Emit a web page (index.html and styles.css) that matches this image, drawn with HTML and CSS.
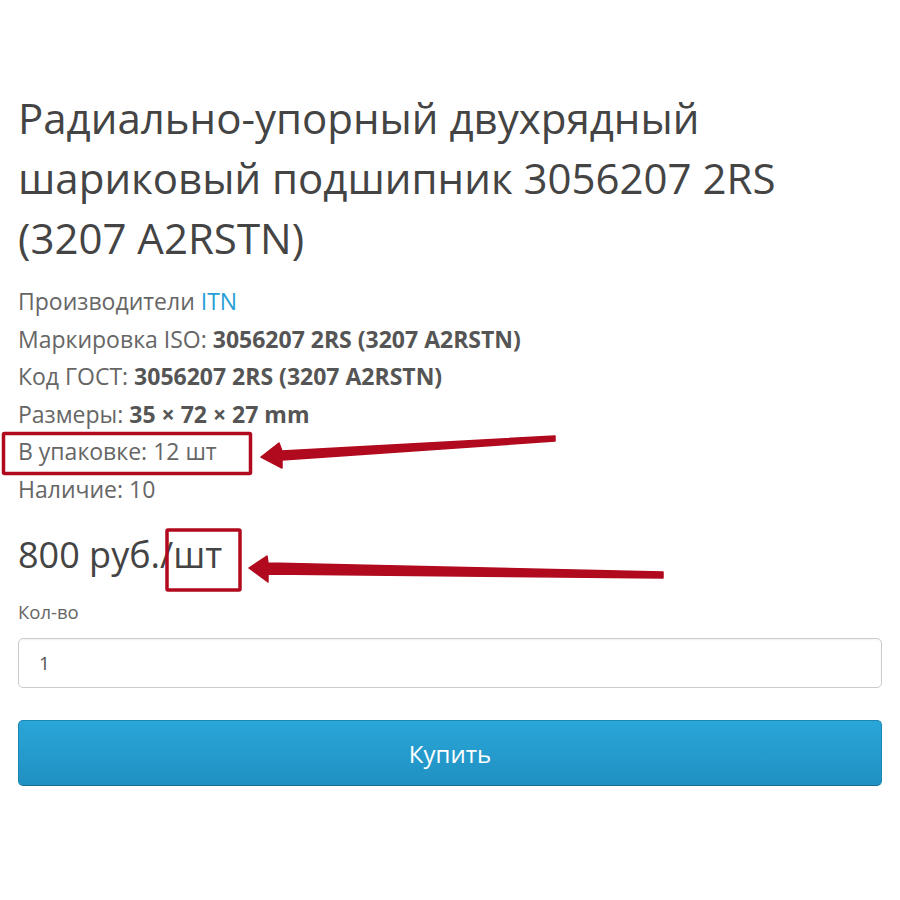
FILE: index.html
```html
<!DOCTYPE html>
<html lang="ru">
<head>
    <meta charset="UTF-8">
    <meta name="viewport" content="width=device-width, initial-scale=1.0">
    <title>Подшипник 3056207 2RS</title>
    <link rel="stylesheet" href="styles.css">
</head>
<body>
    <div class="page">
        <h1 class="product-title">Радиально-упорный двухрядный шариковый подшипник 3056207 2RS (3207 A2RSTN)</h1>

        <ul class="product-info">
            <li>Производители <a href="#">ITN</a></li>
            <li>Маркировка ISO: <b>3056207 2RS (3207 A2RSTN)</b></li>
            <li>Код ГОСТ: <b>3056207 2RS (3207 A2RSTN)</b></li>
            <li>Размеры: <b>35 × 72 × 27 mm</b></li>
            <li>В упаковке: 12 шт</li>
            <li>Наличие: 10</li>
        </ul>

        <div class="price">800 руб./шт</div>

        <div class="form-group">
            <label class="control-label" for="qty">Кол-во</label>
            <input type="text" id="qty" class="form-control" value="1">
        </div>

        <button class="btn-buy">Купить</button>

        <!-- пометки поверх скриншота -->
        <svg class="marks" width="900" height="900" viewBox="0 0 900 900">
            <rect x="3.5" y="433.5" width="247" height="40" rx="1"/>
            <rect x="167" y="530" width="73" height="60" rx="1"/>
            <path class="arrow" d="M555,436 L282,451 L279,443 L261,457 L282,468 L282,460 L555,441 Z"/>
            <path class="arrow" d="M663,572 L268,563 L267,556 L249,568 L268,582 L268,574 L663,578 Z"/>
        </svg>
    </div>
</body>
</html>
```

FILE: styles.css
```css
:root {
    --cor-texto: #555;
    --cor-titulo: #444;
    --cor-link: #2a9fd6;
    --cor-marca: #b10a1e;
}

body {
    margin: 0;
    font-family: 'Open Sans', 'DejaVu Sans', sans-serif;
    color: var(--cor-texto);
    background: #fff;
}

.page {
    position: relative;
    height: 900px;
    padding: 88px 18px 0;
    box-sizing: border-box;
    overflow: hidden;
}

.product-title {
    margin: 0;
    font-size: 42px;
    font-weight: 400;
    line-height: 60px;
    color: var(--cor-titulo);
}

.product-info {
    list-style: none;
    margin: 15px 0 0;
    padding: 0;
    font-size: 23px;
    line-height: 37.5px;
    color: #666;
}

.product-info b {
    color: #555;
}

.product-info a {
    color: var(--cor-link);
    text-decoration: none;
}

.price {
    margin-top: 22px;
    font-size: 36px;
    line-height: 50px;
    color: #444;
}

.form-group {
    margin-top: 20px;
}

.control-label {
    display: block;
    font-size: 18.5px;
    line-height: 24px;
    color: #666;
    margin-bottom: 14px;
}

.form-control {
    display: block;
    width: 100%;
    height: 50px;
    box-sizing: border-box;
    padding: 0 20px;
    font-family: inherit;
    font-size: 19px;
    color: #555;
    border: 1px solid #ccc;
    border-radius: 5px;
    box-shadow: inset 0 1px 2px rgba(0, 0, 0, 0.06);
}

.btn-buy {
    display: block;
    width: 100%;
    height: 66px;
    margin-top: 32px;
    font-family: inherit;
    font-size: 24px;
    color: #fff;
    border: 1px solid #1c86b4;
    border-bottom-color: #176f96;
    border-radius: 5px;
    background: linear-gradient(#2aa6d8, #2090c2);
    cursor: pointer;
}

.marks {
    position: absolute;
    top: 0;
    left: 0;
    pointer-events: none;
}

.marks rect {
    fill: none;
    stroke: var(--cor-marca);
    stroke-width: 3.5;
}

.marks .arrow {
    fill: var(--cor-marca);
    stroke: var(--cor-marca);
    stroke-width: 1.5;
    stroke-linejoin: round;
}
```
